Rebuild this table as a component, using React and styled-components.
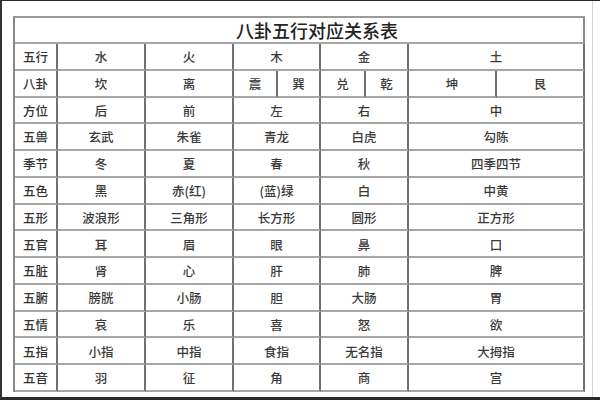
import React from "react";
import styled, { createGlobalStyle } from "styled-components";

const Global = createGlobalStyle`
  html, body { margin: 0; padding: 0; background: #fff; }
  * { box-sizing: border-box; }
`;

const Page = styled.div`
  width: 600px;
  height: 400px;
  border-top: 1px solid #2a2a2a;
  border-left: 2px solid #333;
  border-bottom: 3px solid #2a2a2a;
  padding: 15px 0 0 11px;
  background: #fff;
  position: relative;
  overflow: hidden;
`;

const RightEdge = styled.div`
  position: absolute;
  top: 0;
  bottom: 0;
  left: 590px;
  width: 1px;
  background: #d6d6d6;
`;

const Table = styled.div`
  width: 572px;
  height: 376px;
  display: grid;
  grid-template-columns: 43px 88px 88px 44px 43px 45px 43px 88px 88px;
  grid-template-rows: 26px repeat(13, 1fr);
  border-top: 2px solid #9a9a9a;
  border-left: 2px solid #8a8a8a;
  font-family: "Noto Sans CJK SC", "Noto Sans CJK TC", sans-serif;
  color: #3a3a3a;
`;

const Cell = styled.div`
  grid-column: ${(p) => p.$span || "auto"};
  display: flex;
  align-items: center;
  justify-content: center;
  padding-top: 2px;
  font-size: 12.5px;
  font-weight: 500;
  line-height: 1;
  border-right: 2px solid #707070;
  border-bottom: 2px solid #a6a6a6;
  white-space: nowrap;
`;

const Title = styled(Cell)`
  grid-column: 1 / span 9;
  font-size: 18px;
  color: #222;
  padding-left: 36px;
  padding-top: 0;
  border-right-color: #8a8a8a;
`;

const Label = styled(Cell)`
  color: #333;
`;

const rows = [
  ["五行", ["水", "火", "木", "金", "土"]],
  ["八卦", null],
  ["方位", ["后", "前", "左", "右", "中"]],
  ["五兽", ["玄武", "朱雀", "青龙", "白虎", "勾陈"]],
  ["季节", ["冬", "夏", "春", "秋", "四季四节"]],
  ["五色", ["黑", "赤(红)", "(蓝)绿", "白", "中黄"]],
  ["五形", ["波浪形", "三角形", "长方形", "圆形", "正方形"]],
  ["五官", ["耳", "眉", "眼", "鼻", "口"]],
  ["五脏", ["肾", "心", "肝", "肺", "脾"]],
  ["五腑", ["膀胱", "小肠", "胆", "大肠", "胃"]],
  ["五情", ["哀", "乐", "喜", "怒", "欲"]],
  ["五指", ["小指", "中指", "食指", "无名指", "大拇指"]],
  ["五音", ["羽", "征", "角", "商", "宫"]],
];

const spans = ["span 1", "span 1", "span 2", "span 2", "span 2"];
const bagua = ["坎", "离", "震", "巽", "兑", "乾", "坤", "艮"];

export default function App() {
  return (
    <>
      <Global />
      <Page>
        <Table>
          <Title>八卦五行对应关系表</Title>
          {rows.map(([label, vals]) => (
            <React.Fragment key={label}>
              <Label>{label}</Label>
              {vals
                ? vals.map((v, i) => (
                    <Cell key={i} $span={spans[i]}>
                      {v}
                    </Cell>
                  ))
                : bagua.map((v) => <Cell key={v}>{v}</Cell>)}
            </React.Fragment>
          ))}
        </Table>
        <RightEdge />
      </Page>
    </>
  );
}
